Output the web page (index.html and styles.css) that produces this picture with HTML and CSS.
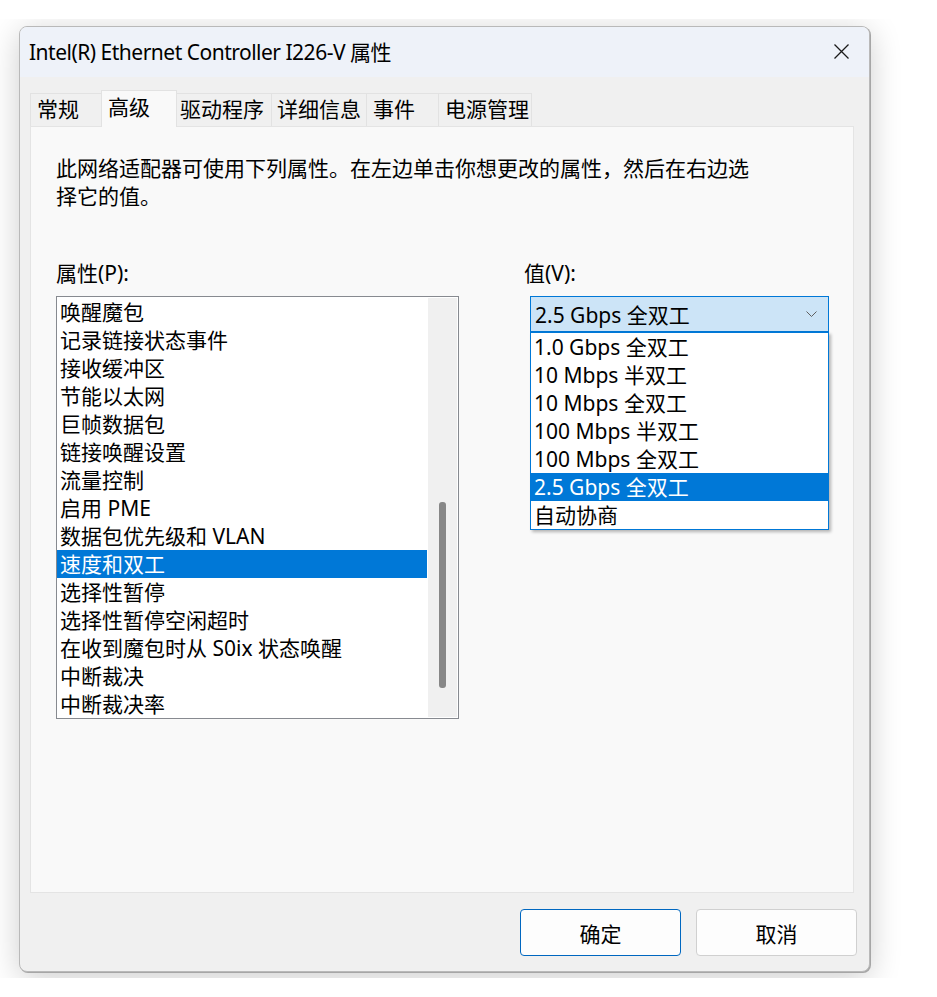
FILE: index.html
```html
<!DOCTYPE html>
<html lang="zh-CN">
<head>
  <meta charset="UTF-8">
  <meta name="viewport" content="width=device-width, initial-scale=1.0">
  <title>Intel(R) Ethernet Controller I226-V 属性</title>
  <link rel="stylesheet" href="styles.css">
</head>
<body>
  <div class="capture">
    <div class="window">
      <div class="titlebar">
        <span class="title">Intel(R) Ethernet Controller I226-V 属性</span>
        <svg class="close" width="15" height="15" viewBox="0 0 15 15">
          <path d="M0.5 0.5 L14.5 14.5 M14.5 0.5 L0.5 14.5" stroke="#1a1a1a" stroke-width="1.3" fill="none"/>
        </svg>
      </div>

      <div class="body">
        <div class="tabs">
          <div class="tab tab-general">常规</div>
          <div class="tab tab-advanced active">高级</div>
          <div class="tab tab-driver">驱动程序</div>
          <div class="tab tab-details">详细信息</div>
          <div class="tab tab-events">事件</div>
          <div class="tab tab-power">电源管理</div>
        </div>

        <div class="panel">
          <p class="desc">此网络适配器可使用下列属性。在左边单击你想更改的属性，然后在右边选<br>择它的值。</p>

          <div class="columns">
            <div class="col-left">
              <div class="label">属性(P):</div>
              <div class="listbox">
                <div class="items">
                  <div class="item">唤醒魔包</div>
                  <div class="item">记录链接状态事件</div>
                  <div class="item">接收缓冲区</div>
                  <div class="item">节能以太网</div>
                  <div class="item">巨帧数据包</div>
                  <div class="item">链接唤醒设置</div>
                  <div class="item">流量控制</div>
                  <div class="item">启用 PME</div>
                  <div class="item">数据包优先级和 VLAN</div>
                  <div class="item selected">速度和双工</div>
                  <div class="item">选择性暂停</div>
                  <div class="item">选择性暂停空闲超时</div>
                  <div class="item">在收到魔包时从 S0ix 状态唤醒</div>
                  <div class="item">中断裁决</div>
                  <div class="item">中断裁决率</div>
                </div>
                <div class="track">
                  <div class="thumb"></div>
                </div>
              </div>
            </div>

            <div class="col-right">
              <div class="label">值(V):</div>
              <div class="combo-wrap">
                <div class="combo">
                  <span>2.5 Gbps 全双工</span>
                  <svg class="chevron" width="11" height="6" viewBox="0 0 11 6">
                    <path d="M0.5 0.5 L5.5 5.5 L10.5 0.5" stroke="#5f5f5f" stroke-width="1" fill="none"/>
                  </svg>
                </div>
                <div class="dropdown">
                  <div class="opt">1.0 Gbps 全双工</div>
                  <div class="opt">10 Mbps 半双工</div>
                  <div class="opt">10 Mbps 全双工</div>
                  <div class="opt">100 Mbps 半双工</div>
                  <div class="opt">100 Mbps 全双工</div>
                  <div class="opt selected">2.5 Gbps 全双工</div>
                  <div class="opt">自动协商</div>
                </div>
              </div>
            </div>
          </div>
        </div>

        <div class="buttons">
          <button class="btn btn-default">确定</button>
          <button class="btn">取消</button>
        </div>
      </div>
    </div>
  </div>
</body>
</html>
```

FILE: styles.css
```css
*{
  box-sizing: border-box;
  font-family: "Noto Sans", "Noto Sans CJK SC", sans-serif;
}
body{
  margin: 0;
  background: #fff;
  color: #000;
}
.capture{
  width: 918px;
  height: 959px;
  margin-top: 19px;
  padding: 7px 0 0 19px;
  overflow: hidden;
}
.window{
  width: 851px;
  height: 946px;
  border: 1px solid #b9b9b9;
  border-radius: 8px;
  background: #f0f0f0;
  box-shadow: 1px 1px 0 #a6a6a6, 0 6px 32px rgba(0,0,0,0.2);
  display: flex;
  flex-direction: column;
  overflow: hidden;
}
.titlebar{
  height: 50px;
  flex: none;
  background: #eef2f9;
  display: flex;
  align-items: center;
  justify-content: space-between;
  padding: 0 20px 0 9px;
}
.title{
  font-size: 21px;
  line-height: 28px;
  letter-spacing: -0.5px;
}
.close{
  display: block;
  margin-top: -1px;
}

.body{
  flex: 1;
  display: flex;
  flex-direction: column;
  padding: 14px 15px 0 10px;
}
.tabs{
  display: flex;
  align-items: flex-end;
  height: 35px;
}
.tab{
  height: 33px;
  border: 1px solid #e2e2e2;
  border-bottom: 0;
  background: #f0f0f0;
  font-size: 21px;
  line-height: 30px;
  padding-left: 6px;
  white-space: nowrap;
}
.tab + .tab{
  margin-left: -1px;
}
.tab.active{
  height: 37px;
  margin-bottom: -1px;
  background: #f9f9f9;
  line-height: 32px;
  position: relative;
  z-index: 1;
}
.tab-general{ width: 72px; }
.tab-advanced{ width: 76px; }
.tab-driver{ width: 96px; padding-left: 3px; }
.tab-details{ width: 96px; padding-left: 5px; }
.tab-events{ width: 73px; }
.tab-power{ width: 94px; }

.panel{
  height: 767px;
  background: #f9f9f9;
  border: 1px solid #e4e4e4;
  padding: 27px 25px 0 25px;
}
.desc{
  margin: 0;
  font-size: 21px;
  line-height: 28px;
}
.columns{
  display: flex;
  gap: 65px;
  margin-top: 49px;
}
.label{
  font-size: 21px;
  line-height: 28px;
}
.col-left{
  width: 403px;
}
.listbox{
  margin-top: 9px;
  height: 423px;
  border: 1px solid #878a90;
  background: #fff;
  padding: 1px 1px 1px 0;
  display: flex;
  overflow: hidden;
}
.items{
  width: 371px;
}
.item{
  height: 28px;
  font-size: 21px;
  line-height: 28px;
  padding-left: 3px;
  white-space: nowrap;
}
.item.selected{
  width: 370px;
  background: #0078d7;
  color: #fff;
}
.track{
  width: 29px;
  background: #f0f0f0;
  padding: 204px 0 0 11px;
}
.thumb{
  width: 7px;
  height: 186px;
  border-radius: 3px;
  background: #878787;
}

.col-right{
  width: 305px;
}
.combo-wrap{
  margin-top: 9px;
  margin-left: 6px;
  position: relative;
}
.combo{
  width: 299px;
  height: 36px;
  border: 1px solid #0078d7;
  background: #cce4f7;
  display: flex;
  align-items: center;
  justify-content: space-between;
  padding: 0 11px 0 4px;
  font-size: 21px;
}
.chevron{
  display: block;
}
.dropdown{
  position: absolute;
  top: 36px;
  left: 0;
  width: 299px;
  border: 1px solid #0078d7;
  background: #fff;
  box-shadow: 2px 2px 3px rgba(0,0,0,0.28);
  z-index: 2;
}
.opt{
  height: 28px;
  font-size: 21px;
  line-height: 28px;
  padding-left: 3px;
  white-space: nowrap;
}
.opt.selected{
  background: #0078d7;
  color: #fff;
}

.buttons{
  display: flex;
  justify-content: flex-end;
  gap: 15px;
  margin-top: 16px;
  margin-right: -3px;
}
.btn{
  width: 161px;
  height: 47px;
  border: 1px solid #d0d0d0;
  border-radius: 4px;
  background: #fdfdfd;
  font-size: 21px;
  color: #000;
  padding: 0;
}
.btn-default{
  border-color: #0067c0;
}
```
